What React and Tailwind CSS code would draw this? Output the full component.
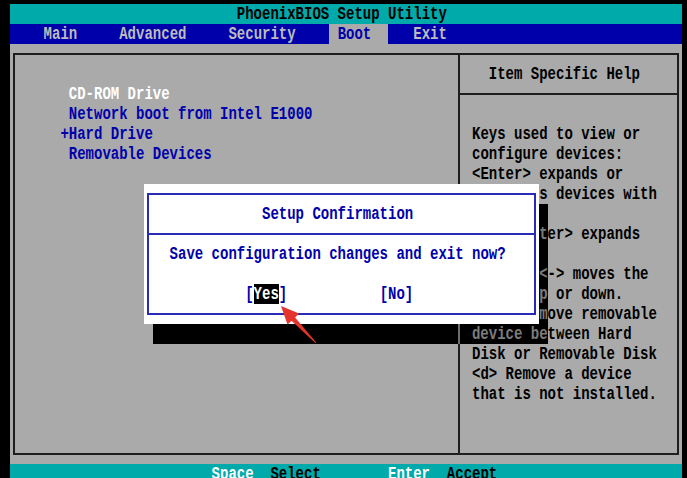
import React from "react";

// one BIOS text cell is 8.4px wide and 20px tall
const T = ({ children, className = "" }) => (
  <span className={`whitespace-pre scale-y-125 leading-[20px] ${className}`}>{children}</span>
);

const Row = ({ children, className = "" }) => (
  <div className={`flex h-[20px] items-center ${className}`}>{children}</div>
);

const bootItems = [
  { text: " CD-ROM Drive", color: "text-white" },
  { text: " Network boot from Intel E1000", color: "text-[#0000aa]" },
  { text: "+Hard Drive", color: "text-[#0000aa]" },
  { text: " Removable Devices", color: "text-[#0000aa]" },
];

const helpLines = [
  "Keys used to view or",
  "configure devices:",
  "<Enter> expands or",
  "collapses devices with",
  "a + or -",
  "<Ctrl+Enter> expands",
  "all",
  "<+> and <-> moves the",
  "device up or down.",
  "<n> May move removable",
  "device between Hard",
  "Disk or Removable Disk",
  "<d> Remove a device",
  "that is not installed.",
];

// characters that still show through the dialog's right shadow column
const shadowChars = ["", "t", "", "<", "p", "m"];

const App = () => {
  return (
    <div className="relative w-[687px] h-[478px] overflow-hidden bg-black pl-[10px] pt-[4px] font-['Liberation_Mono',monospace] text-[14px] font-bold">
      <div className="w-[672px]">
        <Row className="bg-[#00aaaa] pl-[226.8px] text-black">
          <T>PhoenixBIOS Setup Utility</T>
        </Row>

        <Row className="bg-[#0000aa] text-[#bcbcbc]">
          <T>{"    Main     Advanced     Security    "}</T>
          <div className="flex h-full items-center bg-[#aaaaaa] text-[#0000aa]">
            <T>{" Boot  "}</T>
          </div>
          <T>{"   Exit"}</T>
        </Row>

        <div className="h-[420px] bg-[#aaaaaa] px-[3px] py-[9px]">
          <div className="flex h-full border-2 border-[#1e1e1e]">
            <div className="w-[445px] border-r-2 border-[#1e1e1e] pt-[29px] pl-[45.4px]">
              {bootItems.map((item, index) => (
                <Row key={index} className={item.color}>
                  <T>{item.text}</T>
                </Row>
              ))}
            </div>

            <div className="flex flex-1 flex-col text-black">
              <div className="h-[40px] border-b-2 border-[#1e1e1e] pt-[9px] pl-[28.8px]">
                <Row>
                  <T>Item Specific Help</T>
                </Row>
              </div>
              <div className="pt-[29px] pl-[12px]">
                {helpLines.map((line, index) => (
                  <Row key={index}>
                    <T>{line}</T>
                  </Row>
                ))}
              </div>
            </div>
          </div>
        </div>

        <Row className="bg-[#00aaaa]">
          <T className="pl-[201.6px] text-white">Space</T>
          <T className="pl-[16.8px] text-black">Select</T>
          <T className="pl-[67.2px] text-white">Enter</T>
          <T className="pl-[16.8px] text-black">Accept</T>
        </Row>
      </div>

      {/* dialog shadow */}
      <div className="absolute left-[539.2px] top-[204px] w-[8.4px] h-[120px] bg-black text-[#7c7c7c]">
        {shadowChars.map((ch, index) => (
          <Row key={index}>
            <T>{ch}</T>
          </Row>
        ))}
      </div>
      <div className="absolute left-[152.8px] top-[324px] flex h-[20px] w-[394.8px] bg-black pl-[305.2px] text-[#7c7c7c]">
        <div className="h-full w-[2px] bg-[#6e6e6e]" />
        <Row className="pl-[12px]">
          <T>device be</T>
        </Row>
      </div>

      {/* confirmation dialog */}
      <div className="absolute left-[144.4px] top-[184px] h-[140px] w-[394.8px] bg-white px-[3px] py-[9px]">
        <div className="flex h-full flex-col border-2 border-[#2a2ab8] text-[#0000aa]">
          <div className="h-[40px] border-b-2 border-[#2a2ab8] pt-[9px] pl-[112.6px]">
            <Row>
              <T>Setup Confirmation</T>
            </Row>
          </div>
          <Row className="mt-[9px] pl-[20.2px]">
            <T>Save configuration changes and exit now?</T>
          </Row>
          <Row className="mt-[20px] pl-[95.8px]">
            <T>[</T>
            <div className="flex h-full items-center bg-black text-white">
              <T>Yes</T>
            </div>
            <T>{"]           [No]"}</T>
          </Row>
        </div>
      </div>

      {/* red pointer arrow */}
      <svg
        className="absolute left-[270px] top-[300px]"
        width="55"
        height="50"
        viewBox="270 300 55 50"
      >
        <polygon
          fill="#e5342b"
          points="281,306 299.1,313.6 295.1,317.4 316.4,342.7 315.6,343.3 291.5,320.8 287.5,324.6"
        />
      </svg>
    </div>
  );
};

export default App;
